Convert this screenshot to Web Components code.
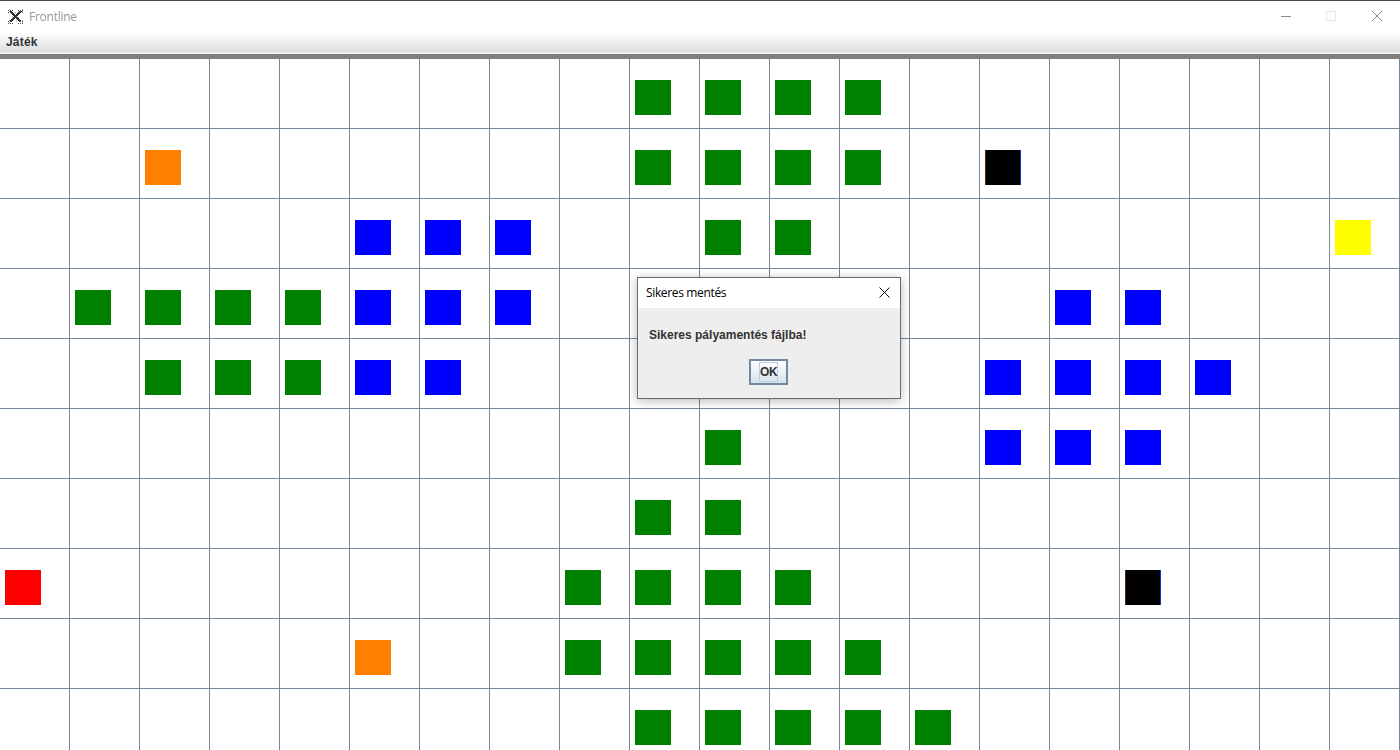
<!DOCTYPE html>
<html>
<head>
<meta charset="utf-8">
<title>Frontline</title>
<style>
  html, body { margin: 0; height: 100%; overflow: hidden; background: #fff; }
</style>
</head>
<body>
<game-window>
  <title-bar title-text="Frontline"></title-bar>
  <menu-bar><span>Játék</span></menu-bar>
  <game-board></game-board>
  <message-dialog dialog-title="Sikeres mentés">Sikeres pályamentés fájlba!</message-dialog>
</game-window>

<script>
class GameWindow extends HTMLElement {
  constructor() {
    super();
    this.attachShadow({ mode: "open" }).innerHTML = `
      <style>
        :host {
          display: flex;
          flex-direction: column;
          position: relative;
          width: 1400px;
          height: 750px;
          overflow: hidden;
          background: #fff;
        }
      </style>
      <slot></slot>
    `;
  }
}

class TitleBar extends HTMLElement {
  constructor() {
    super();
    this.attachShadow({ mode: "open" }).innerHTML = `
      <style>
        :host {
          display: flex;
          align-items: center;
          flex: 0 0 auto;
          height: 30px;
          border-top: 1px solid #4a4a4a;
          background: #fff;
          font: 12px "Open Sans", "Noto Sans", sans-serif;
          letter-spacing: -.25px;
          color: #999;
        }
        .icon { width: 15px; height: 15px; margin: 0 6px 0 8px; flex: 0 0 auto; }
        .name { flex: 1; }
        .btn { width: 45px; height: 30px; display: flex; align-items: center; justify-content: center; }
        .btn.min { width: 44px; }
        .btn.max, .btn.close { width: 46px; }
        svg { display: block; }
      </style>
      <svg class="icon" viewBox="0 0 15 15" shape-rendering="crispEdges">
        <path d="M2 2 13 13M13 2 2 13" stroke="#333" stroke-width="1.8" fill="none"/>
        <path d="M0 1h5M10 1h5M0 3h3M12 3h3M0 12h3M12 12h3M0 14h5M10 14h5" stroke="#555" stroke-width="1" stroke-dasharray="1 1" fill="none"/>
        <path d="M1 0v4M14 0v4M1 11v4M14 11v4M7 3v1M8 11v1M4 7h1M10 8h1" stroke="#999" stroke-width="1" stroke-dasharray="1 1" fill="none"/>
      </svg>
      <span class="name">${this.getAttribute("title-text")}</span>
      <div class="btn min">
        <svg width="10" height="10" viewBox="0 0 10 10"><path d="M0 5.5h10" stroke="#8c8c8c"/></svg>
      </div>
      <div class="btn max">
        <svg width="10" height="10" viewBox="0 0 10 10"><rect x=".5" y=".5" width="9" height="9" fill="none" stroke="#e4e4e4"/></svg>
      </div>
      <div class="btn close">
        <svg width="10" height="10" viewBox="0 0 10 10"><path d="M0 0 10 10M10 0 0 10" stroke="#8c8c8c"/></svg>
      </div>
    `;
  }
}

class MenuBar extends HTMLElement {
  constructor() {
    super();
    this.attachShadow({ mode: "open" }).innerHTML = `
      <style>
        :host {
          display: flex;
          align-items: center;
          flex: 0 0 auto;
          box-sizing: border-box;
          height: 28px;
          padding: 0 6px 7px;
          background: linear-gradient(#fff 0, #fff 2px, #dcdcdc 21px, #f0f0f0 21px, #f0f0f0 23px, #808080 23px);
          font: bold 12px "Liberation Sans", Arial, sans-serif;
          letter-spacing: .2px;
          color: #333;
        }
      </style>
      <slot></slot>
    `;
  }
}

class GridCell extends HTMLElement {
  constructor() {
    super();
    this.attachShadow({ mode: "open" }).innerHTML = `
      <style>
        :host {
          display: block;
          box-sizing: border-box;
          width: 70px;
          height: 70px;
          padding: 21px 0 0 5px;
          border-right: 1px solid #778899;
          border-bottom: 1px solid #778899;
        }
        .unit { width: 36px; height: 35px; box-sizing: border-box; }
        .unit.black { border-left: 1px solid #4a2800; border-right: 1px solid #0a30d0; }
      </style>
    `;
  }

  connectedCallback() {
    const color = this.getAttribute("unit");
    if (color) {
      const unit = document.createElement("div");
      unit.className = "unit " + color;
      unit.style.background = color === "orange" ? "#ff8000" : color === "green" ? "#008000" : color;
      this.shadowRoot.appendChild(unit);
    }
  }
}

// sor -> oszlop -> szin, ahogy a palyan van
const UNITS = [
  { green: [9, 10, 11, 12] },
  { orange: [2], green: [9, 10, 11, 12], black: [14] },
  { blue: [5, 6, 7], green: [10, 11], yellow: [19] },
  { green: [1, 2, 3, 4], blue: [5, 6, 7, 15, 16] },
  { green: [2, 3, 4], blue: [5, 6, 14, 15, 16, 17] },
  { green: [10], blue: [14, 15, 16] },
  { green: [9, 10] },
  { red: [0], green: [8, 9, 10, 11], black: [16] },
  { orange: [5], green: [8, 9, 10, 11, 12] },
  { green: [9, 10, 11, 12, 13] },
];

class GameBoard extends HTMLElement {
  constructor() {
    super();
    this.attachShadow({ mode: "open" }).innerHTML = `
      <style>
        :host {
          display: grid;
          grid-template-columns: repeat(20, 70px);
          grid-auto-rows: 70px;
          flex: 0 0 auto;
          background: #fff;
        }
      </style>
    `;
    UNITS.forEach(row => {
      for (let col = 0; col < 20; col++) {
        const cell = document.createElement("grid-cell");
        for (const color in row) {
          if (row[color].includes(col)) cell.setAttribute("unit", color);
        }
        this.shadowRoot.appendChild(cell);
      }
    });
  }
}

class MessageDialog extends HTMLElement {
  constructor() {
    super();
    this.attachShadow({ mode: "open" }).innerHTML = `
      <style>
        :host {
          display: flex;
          flex-direction: column;
          position: absolute;
          left: 637px;
          top: 277px;
          width: 264px;
          height: 122px;
          box-sizing: border-box;
          border: 1px solid #6b6b6b;
          background: #eeeeee;
          box-shadow: 0 2px 10px rgba(0, 0, 0, .28);
        }
        .head {
          display: flex;
          align-items: center;
          justify-content: space-between;
          height: 30px;
          padding: 0 10px 0 8px;
          background: #fff;
          font: 12px "Open Sans", "Noto Sans", sans-serif;
          letter-spacing: -.35px;
          color: #000;
        }
        .head span { margin-top: -1px; }
        .head svg { display: block; margin-top: -1px; }
        .text {
          margin: 19px 0 0 11px;
          font: bold 12px/16px "Liberation Sans", Arial, sans-serif;
          color: #333;
        }
        .actions { display: flex; justify-content: center; margin-top: 16px; padding-right: 1px; }
        button {
          box-sizing: border-box;
          width: 39px;
          height: 26px;
          margin: 0;
          padding: 0;
          border: 2px solid #778899;
          background: linear-gradient(#fff, #d5e2ef);
          font: bold 12px "Liberation Sans", Arial, sans-serif;
          color: #333;
          display: flex;
          align-items: center;
          justify-content: center;
        }
        button span { display: block; border: 1px solid #b8cfe5; padding: 2px 0; width: 17px; line-height: 14px; text-align: center; letter-spacing: -0.3px; }
      </style>
      <div class="head">
        <span>${this.getAttribute("dialog-title")}</span>
        <svg width="11" height="11" viewBox="0 0 11 11"><path d="M.5.5 10.5 10.5M10.5.5.5 10.5" stroke="#111" fill="none"/></svg>
      </div>
      <div class="text"><slot></slot></div>
      <div class="actions"><button><span>OK</span></button></div>
    `;
  }
}

customElements.define("game-window", GameWindow);
customElements.define("title-bar", TitleBar);
customElements.define("menu-bar", MenuBar);
customElements.define("grid-cell", GridCell);
customElements.define("game-board", GameBoard);
customElements.define("message-dialog", MessageDialog);
</script>
</body>
</html>
